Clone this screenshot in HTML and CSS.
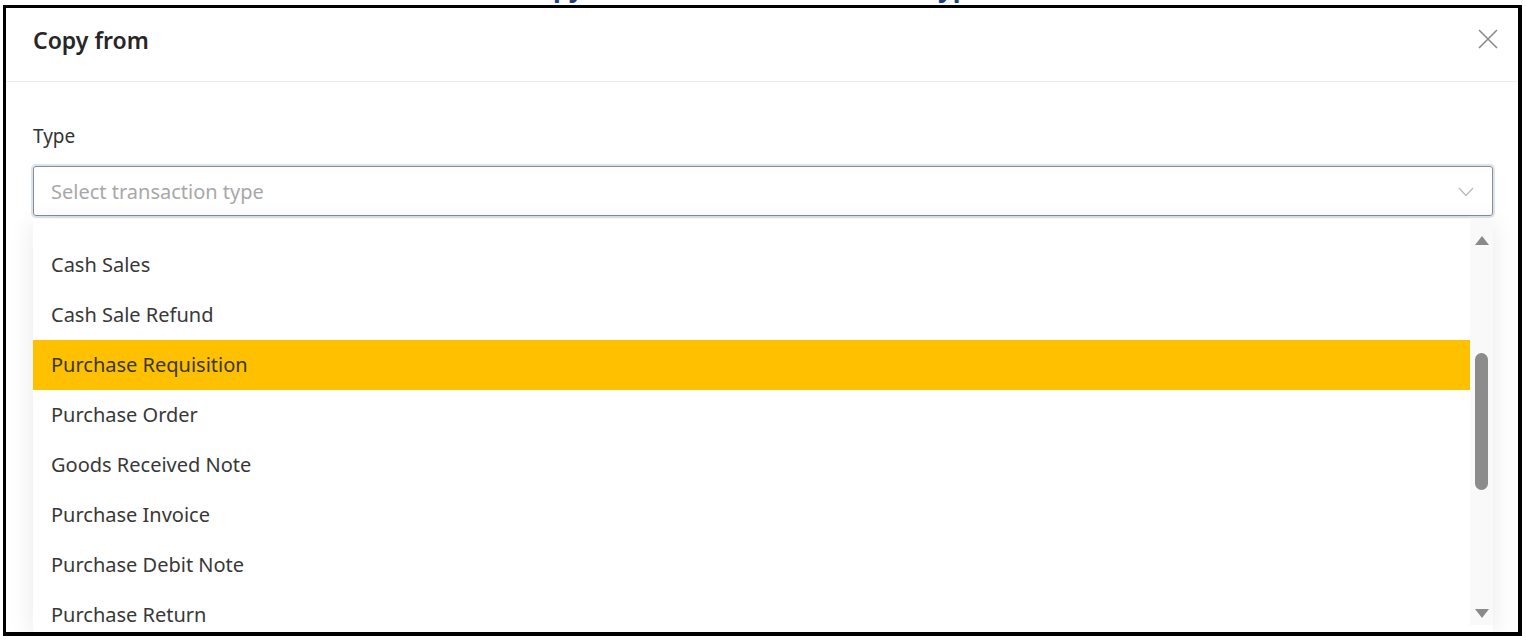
FILE: index.html
```html
<!DOCTYPE html>
<html>
<head>
<meta charset="utf-8">
<link rel="stylesheet" href="styles.css">
</head>
<body>
<div class="caption"><span class="caption-text">Copy from another transaction type</span></div>
<div class="frame">
  <div class="dialog">
    <div class="header">
      <div class="title">Copy from</div>
      <svg class="close" width="20" height="20" viewBox="0 0 20 20"><path d="M1 1 L19 19 M19 1 L1 19" stroke="#8a8a8a" stroke-width="1.6" fill="none"/></svg>
    </div>
    <div class="body">
      <div class="label">Type</div>
      <div class="select">
        <span class="placeholder">Select transaction type</span>
        <svg class="chev" width="16" height="10" viewBox="0 0 16 10"><path d="M1 1 L8 8.5 L15 1" stroke="#b8b8b8" stroke-width="1.2" fill="none"/></svg>
      </div>
      <div class="dropdown">
        <ul class="list">
          <li>Cash Sales</li>
          <li>Cash Sale Refund</li>
          <li class="active">Purchase Requisition</li>
          <li>Purchase Order</li>
          <li>Goods Received Note</li>
          <li>Purchase Invoice</li>
          <li>Purchase Debit Note</li>
          <li>Purchase Return</li>
        </ul>
        <div class="scrollbar">
          <div class="arrow up"></div>
          <div class="track"><div class="thumb"></div></div>
          <div class="arrow down"></div>
        </div>
      </div>
    </div>
  </div>
</div>
</body>
</html>
```
FILE: styles.css
```css
html, body {
  margin: 0;
  padding: 0;
  background: #fff;
  height: 641px;
  overflow: hidden;
}
body {
  font-family: "Noto Sans", "Segoe UI", sans-serif;
  color: #333;
}
.caption {
  height: 5px;
  overflow: hidden;
  padding-left: 520px;
}
.caption-text {
  display: block;
  margin-top: -26px;
  font-family: "Noto Sans", sans-serif;
  font-size: 26px;
  line-height: 26px;
  font-weight: 700;
  color: #1f3f7a;
  white-space: nowrap;
}
.frame {
  margin-left: 3px;
  width: 1512px;
  height: 624px;
  border-style: solid;
  border-color: #000;
  border-width: 3px 4px 4px 3px;
  overflow: hidden;
  background: #fff;
}
.dialog {
  height: 100%;
  display: flex;
  flex-direction: column;
}
.header {
  height: 74px;
  flex: none;
  border-bottom: 1px solid #ececec;
  display: flex;
  align-items: flex-start;
  justify-content: space-between;
  padding: 17px 20px 0 27px;
  box-sizing: border-box;
}
.title {
  font-size: 23px;
  line-height: 30px;
  font-weight: 600;
  color: #262626;
}
.close {
  margin-top: 4px;
}
.body {
  padding: 41px 25px 0 27px;
  flex: 1;
  display: flex;
  flex-direction: column;
  min-height: 0;
}
.label {
  font-size: 19px;
  line-height: 26px;
  color: #333;
}
.select {
  margin-top: 17px;
  height: 50px;
  flex: none;
  border: 1px solid #8c8c8c;
  border-radius: 3px;
  box-shadow: 0 0 0 2px #d9e3f1;
  display: flex;
  align-items: center;
  justify-content: space-between;
  padding: 0 18px 0 17px;
  box-sizing: border-box;
}
.placeholder {
  font-size: 20px;
  color: #a8a8a8;
}
.chev {
  margin-top: 1px;
}
.dropdown {
  margin-top: 3px;
  flex: 1;
  display: flex;
  background: #fff;
  box-shadow: 0 4px 24px rgba(0, 0, 0, 0.09);
  min-height: 0;
}
.list {
  list-style: none;
  margin: 0;
  padding: 21px 0 0 0;
  flex: 1;
}
.list li {
  height: 50px;
  line-height: 50px;
  padding-left: 18px;
  font-size: 20px;
  color: #383838;
}
.list li.active {
  background: #ffc000;
}
.scrollbar {
  width: 23px;
  background: #f9f9f9;
  display: flex;
  flex-direction: column;
  align-items: center;
  margin-bottom: 7px;
}
.arrow {
  width: 0;
  height: 0;
  border-left: 7px solid transparent;
  border-right: 7px solid transparent;
}
.arrow.up {
  margin-top: 17px;
  border-bottom: 9px solid #8a8a8a;
}
.arrow.down {
  margin-bottom: 7px;
  border-top: 9px solid #8a8a8a;
}
.track {
  flex: 1;
  width: 14px;
}
.thumb {
  margin-top: 108px;
  height: 137px;
  width: 13px;
  background: #8c8c8c;
  border-radius: 7px;
}
```
